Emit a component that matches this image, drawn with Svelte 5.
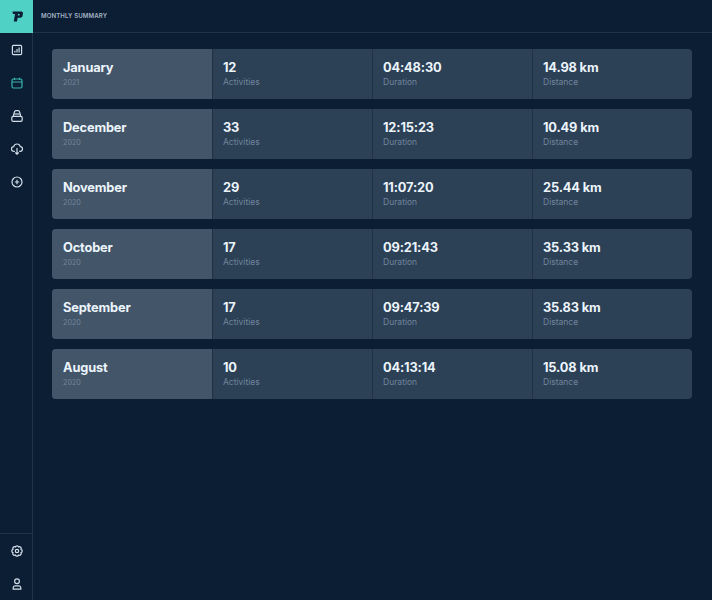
<script lang="ts">
  const months = [
    { name: 'January', year: 2021, activities: 12, duration: '04:48:30', distance: '14.98 km' },
    { name: 'December', year: 2020, activities: 33, duration: '12:15:23', distance: '10.49 km' },
    { name: 'November', year: 2020, activities: 29, duration: '11:07:20', distance: '25.44 km' },
    { name: 'October', year: 2020, activities: 17, duration: '09:21:43', distance: '35.33 km' },
    { name: 'September', year: 2020, activities: 17, duration: '09:47:39', distance: '35.83 km' },
    { name: 'August', year: 2020, activities: 10, duration: '04:13:14', distance: '15.08 km' }
  ]
</script>

<div class="app">
  <aside class="sidebar">
    <div class="logo">
      <svg width="13" height="11" viewBox="0 0 14 13">
        <path fill="#0b1e33" fill-rule="evenodd" d="M1 0.5H12.2L13.6 2L12.8 6.4L11 8H7.2L6.4 12.5H2.6L4.1 3.4H1.6ZM7.6 3.4L7.3 5.3H9.3L9.7 3.4Z" />
      </svg>
    </div>
    <nav class="nav">
      <button type="button" class="nav-item" aria-label="Dashboard">
        <svg viewBox="0 0 12 12"><rect x="1.4" y="1.4" width="9.2" height="9.2" rx="1" /><path d="M3.9 8.6V6.8M6 8.6V5M8.1 8.6V3.4" /></svg>
      </button>
      <button type="button" class="nav-item active" aria-label="Monthly summary">
        <svg viewBox="0 0 12 12"><rect x="1" y="2" width="10" height="9" rx="1.5" /><path d="M1 5H11M3.5 .8V3M8.5 .8V3" /></svg>
      </button>
      <button type="button" class="nav-item" aria-label="Gear">
        <svg viewBox="0 0 12 12"><path d="M2.2 6.4L3.4 2C3.6 1.1 4.2 .7 4.9 .7H7.1C7.8 .7 8.4 1.1 8.6 2L9.8 6.4" /><rect x=".8" y="6.4" width="10.4" height="4.9" rx="1.4" /><path d="M3.2 4H8.8" /></svg>
      </button>
      <button type="button" class="nav-item" aria-label="Sync">
        <svg viewBox="0 0 12 12"><path d="M3.8 8.4H3A2.4 2.4 0 0 1 2.7 3.6A3.4 3.4 0 0 1 9.3 3.6A2.4 2.4 0 0 1 9 8.4H8.2" /><path d="M6 5V11.2M4.3 9.5L6 11.2L7.7 9.5" /></svg>
      </button>
      <button type="button" class="nav-item" aria-label="Add">
        <svg viewBox="0 0 12 12"><circle cx="6" cy="6" r="5" /><path d="M6 3.8V8.2M3.8 6H8.2" /></svg>
      </button>
    </nav>
    <div class="nav bottom">
      <button type="button" class="nav-item" aria-label="Settings">
        <svg viewBox="0 0 12 12"><circle cx="6" cy="6" r="1.7" /><path d="M7.68 1.93A1.8 1.8 0 0 1 10.07 4.32A1.8 1.8 0 0 1 10.07 7.68A1.8 1.8 0 0 1 7.68 10.07A1.8 1.8 0 0 1 4.32 10.07A1.8 1.8 0 0 1 1.93 7.68A1.8 1.8 0 0 1 1.93 4.32A1.8 1.8 0 0 1 4.32 1.93A1.8 1.8 0 0 1 7.68 1.93Z" /></svg>
      </button>
      <button type="button" class="nav-item" aria-label="Profile">
        <svg viewBox="0 0 12 12"><circle cx="6" cy="3.3" r="2.4" /><path d="M2.2 11.2V9.8C2.2 8.6 3 7.9 4 7.9H8C9 7.9 9.8 8.6 9.8 9.8V11.2Z" /></svg>
      </button>
    </div>
  </aside>

  <main class="main">
    <header class="topbar">MONTHLY SUMMARY</header>
    <section class="list">
      {#each months as month}
        <article class="row">
          <div class="cell month">
            <div class="value">{month.name}</div>
            <div class="label small">{month.year}</div>
          </div>
          <div class="cell">
            <div class="value">{month.activities}</div>
            <div class="label">Activities</div>
          </div>
          <div class="cell">
            <div class="value">{month.duration}</div>
            <div class="label">Duration</div>
          </div>
          <div class="cell">
            <div class="value">{month.distance}</div>
            <div class="label">Distance</div>
          </div>
        </article>
      {/each}
    </section>
  </main>
</div>

<style>
  :global(body) {
    background-color: #0b1e33;
    font-family: Inter, 'Noto Sans', sans-serif;
  }

  .app {
    display: flex;
    height: 600px;
    overflow: hidden;
  }

  .sidebar {
    border-right: 1px solid #1f3347;
    box-sizing: border-box;
    display: flex;
    flex-direction: column;
    flex-shrink: 0;
    width: 33px;
  }

  .logo {
    align-items: center;
    background-color: #4fd1c5;
    display: flex;
    height: 33px;
    justify-content: center;
    margin-right: -1px;
  }

  .logo svg {
    margin-left: 2px;
  }

  .nav {
    display: flex;
    flex-direction: column;
  }

  .bottom {
    border-top: 1px solid #1f3347;
    margin-top: auto;
  }

  .nav-item {
    align-items: center;
    background: none;
    border: none;
    display: flex;
    flex-shrink: 0;
    height: 33px;
    justify-content: center;
    padding: 0;
    width: 33px;
  }

  .nav-item svg {
    fill: none;
    height: 12px;
    stroke: #d3deea;
    stroke-width: 1.2;
    width: 12px;
  }

  .nav-item.active svg {
    stroke: #38b2ac;
  }

  .main {
    flex: 1;
    min-width: 0;
  }

  .topbar {
    border-bottom: 1px solid #1f3347;
    box-sizing: border-box;
    color: #a3b3c5;
    font-size: 6.1px;
    font-weight: 600;
    height: 33px;
    letter-spacing: 0.1px;
    line-height: 32px;
    padding-left: 8px;
  }

  .list {
    display: flex;
    flex-direction: column;
    gap: 10px;
    padding: 16px 20px 0 19px;
  }

  .row {
    background-color: #2c4056;
    border-radius: 4px;
    display: grid;
    grid-template-columns: repeat(4, 1fr);
    height: 50px;
    overflow: hidden;
  }

  .cell {
    border-left: 1px solid #1f3145;
    box-sizing: border-box;
    display: flex;
    flex-direction: column;
    justify-content: center;
    padding-left: 10px;
  }

  .month {
    background-color: #435669;
    border-left: none;
    padding-left: 11px;
  }

  .value {
    color: #ebf4fb;
    font-size: 12.8px;
    font-weight: 700;
    letter-spacing: -0.15px;
    line-height: 16px;
  }

  .label {
    color: #71859b;
    font-size: 8.5px;
    line-height: 11px;
    margin-top: 1px;
  }

  .label.small {
    font-size: 7.2px;
  }
</style>
